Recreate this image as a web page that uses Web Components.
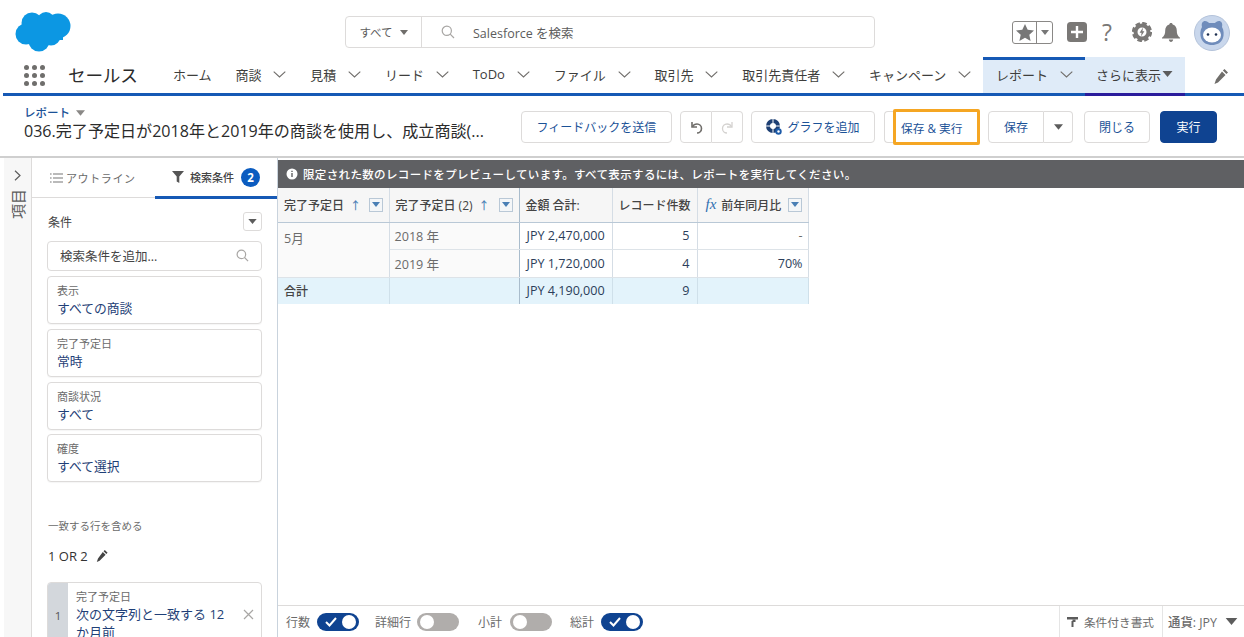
<!DOCTYPE html>
<html lang="ja">
<head>
<meta charset="utf-8">
<title>レポート</title>
<style>
html,body{margin:0;padding:0;height:100%;background:#fff;overflow:hidden}
body{font-family:"Open Sans","Noto Sans CJK JP",sans-serif;color:#3e3e3c}
</style>
</head>
<body>
<sf-app>
  <sf-global-header slot="top"></sf-global-header>
  <sf-nav slot="top">
    <sf-nav-item>ホーム</sf-nav-item>
    <sf-nav-item chevron>商談</sf-nav-item>
    <sf-nav-item chevron>見積</sf-nav-item>
    <sf-nav-item chevron>リード</sf-nav-item>
    <sf-nav-item chevron>ToDo</sf-nav-item>
    <sf-nav-item chevron>ファイル</sf-nav-item>
    <sf-nav-item chevron>取引先</sf-nav-item>
    <sf-nav-item chevron>取引先責任者</sf-nav-item>
    <sf-nav-item chevron>キャンペーン</sf-nav-item>
    <sf-nav-item chevron active>レポート</sf-nav-item>
    <sf-nav-item more>さらに表示</sf-nav-item>
  </sf-nav>
  <sf-page-header slot="top"></sf-page-header>
  <sf-rail slot="left"></sf-rail>
  <sf-filter-panel slot="left"></sf-filter-panel>
  <sf-report-view slot="main"></sf-report-view>
</sf-app>
<script>
function def(name, html, init){
  customElements.define(name, class extends HTMLElement{
    constructor(){super();this.attachShadow({mode:'open'}).innerHTML=html;}
    connectedCallback(){ if(init) init(this); }
  });
}
const TRI = (w,h,c)=>`<svg width="${w}" height="${h}" viewBox="0 0 10 6"><path d="M0 0h10L5 6z" fill="${c}"/></svg>`;

def('sf-app',`<style>
:host{display:flex;flex-direction:column;height:637px;overflow:hidden}
.body{flex:1;min-height:0;display:flex;overflow:hidden}
.left{display:flex;flex:none}
.main{flex:1;min-width:0;display:flex}
</style>
<slot name="top"></slot>
<div class="body"><div class="left"><slot name="left"></slot></div><div class="main"><slot name="main"></slot></div></div>`);

def('sf-global-header',`<style>
:host{display:grid;grid-template-columns:345px 530px 1fr;height:57px;box-sizing:border-box;padding-top:7px;align-items:center;flex:none}
.logo{padding-left:15px;display:flex}
.search{display:flex;height:32px;border:1px solid #dddbda;border-radius:4px;box-sizing:border-box;font-size:12.5px;color:#5c5c5c;align-items:center}
.all{width:76px;height:100%;box-sizing:border-box;border-right:1px solid #dddbda;display:flex;align-items:center;justify-content:center;gap:7px;font-size:11.5px}
.q{margin-left:19px;display:flex}
.ph{margin-left:18px}
.icons{display:flex;align-items:center;position:relative;height:100%;padding-left:137px}
.fav{display:flex;width:41px;height:23px;border:1px solid #8a8886;border-radius:3px;box-sizing:border-box}
.fav div{display:flex;align-items:center;justify-content:center}
.fav .a{width:23px;border-right:1px solid #8a8886}
.fav .b{flex:1}
.plus{margin-left:14px}
.help{margin-left:15px;font-size:23px;line-height:24px;color:#7a7876;width:12px;font-weight:400}
.gear{margin-left:18px}
.bell{margin-left:10px}
.av{margin-left:14px;margin-top:1px}
svg{display:block}
</style>
<div class="logo"><svg width="58" height="40" viewBox="0 0 58 40"><g fill="#0c97e3"><circle cx="17" cy="11" r="10.5"/><circle cx="31" cy="9" r="9"/><circle cx="43" cy="14" r="12.5"/><circle cx="11" cy="22" r="10.5"/><circle cx="24" cy="29" r="10.5"/><circle cx="36" cy="24" r="9.5"/><rect x="12" y="10" width="36" height="18"/></g></svg></div>
<div class="search">
  <div class="all"><span>すべて</span>${TRI(8,5,'#706e6b')}</div>
  <div class="q"><svg width="14" height="14" viewBox="0 0 14 14" fill="none" stroke="#a8a6a4" stroke-width="1.2"><circle cx="5.8" cy="5.8" r="4.6"/><path d="M9.2 9.2 13 13"/></svg></div>
  <span class="ph">Salesforce を検索</span>
</div>
<div class="icons">
  <div class="fav"><div class="a"><svg width="18" height="17" viewBox="0 0 18 17"><path d="M9 0l2.7 5.8 6.3.7-4.7 4.2 1.3 6.3L9 13.8 3.4 17l1.3-6.3L0 6.5l6.3-.7z" fill="#777"/></svg></div><div class="b">${TRI(8,5,'#777')}</div></div>
  <div class="plus"><svg width="20" height="20" viewBox="0 0 20 20"><rect width="20" height="20" rx="3.5" fill="#7a7876"/><path d="M10 4v12M4 10h12" stroke="#fff" stroke-width="2.4"/></svg></div>
  <div class="help">?</div>
  <div class="gear"><svg width="20" height="20" viewBox="0 0 20 20"><circle cx="10" cy="10" r="6.500" fill="none" stroke="#7a7876" stroke-width="4"/><circle cx="10" cy="10" r="8.800" fill="none" stroke="#7a7876" stroke-width="2.600" stroke-dasharray="4.6 2.300"/><path d="M11 5.500 7.600 10.800h2L9 14.500l3.400-5.300h-2z" fill="#7a7876"/></svg></div>
  <div class="bell"><svg width="18" height="19" viewBox="0 0 18 19"><path d="M9 0c1 0 1.700.7 1.700 1.600C13.400 2.400 14.800 4.700 14.800 7.500c0 3.500.6 5 3.200 7.200v.8H0v-.8C2.600 12.500 3.200 11 3.200 7.500c0-2.800 1.400-5.100 4.100-5.900C7.300.7 8 0 9 0zM6.800 16.500h4.400C11 18 10.100 19 9 19s-2-1-2.200-2.500z" fill="#7a7876"/></svg></div>
  <div class="av"><svg width="36" height="36" viewBox="0 0 36 36"><circle cx="18" cy="18" r="17.500" fill="#c9d7ec" stroke="#b4c3da"/><path d="M8 12c-1-4 1-6 3-6 2 0 3 1 4 2h6c1-1 2-2 4-2s4 2 3 6c2 3 2 8 1 11-2 5-6 7-11 7S9 28 7 23c-1-3-1-8 1-11z" fill="#6f8cbb"/><ellipse cx="18" cy="20" rx="9" ry="7.500" fill="#fff"/><circle cx="14" cy="19.500" r="1.300" fill="#1e2f50"/><circle cx="22" cy="19.500" r="1.300" fill="#1e2f50"/></svg></div>
</div>`);

def('sf-nav',`<style>
:host{display:flex;height:39px;margin-left:3px;box-sizing:border-box;border-bottom:3px solid #1659b5;flex:none;position:relative;align-items:stretch}
.launcher{width:21px;margin-left:21px;display:grid;grid-template-columns:repeat(3,5px);gap:3px;align-content:center}
.launcher i{width:5px;height:5px;border-radius:50%;background:#6f6e6c}
.name{font-size:17.6px;line-height:36px;margin-left:23px;width:93px;color:#2b2b2b;white-space:nowrap;letter-spacing:-.2px;flex:none}
.pen{position:absolute;right:16px;top:12px}
::slotted(sf-nav-item){flex:none}
</style>
<div class="launcher"><i></i><i></i><i></i><i></i><i></i><i></i><i></i><i></i><i></i></div>
<div class="name">セールス</div>
<slot></slot>
<svg class="pen" width="14" height="15" viewBox="0 0 14 15"><path d="M10.500 0l3.500 3.500-1.600 1.600-3.500-3.500zM8 2.500 11.500 6 4 13.500.5 15 2 10.500z" fill="#706e6b"/></svg>`);

def('sf-nav-item',`<style>
:host{display:flex;align-items:center;padding:0 11.750px 2px 12px;font-size:13px;color:#3e3e3c;gap:12px;height:36px;box-sizing:border-box;white-space:nowrap;position:relative}
:host([active]){background:#dfebf8;border-top:3px solid #1659b5;padding:0 12px 5px 13px;gap:12px}
:host([more]){background:#dfebf8;width:100px;padding:0 0 2px 11px;gap:1px;height:39px;margin-bottom:-3px;border-bottom:3px solid #2a1c9c}
:host(:not([chevron])) .c{display:none}
.m{display:none}
:host([more]) .m{display:block}
svg{display:block;flex:none}
</style>
<slot></slot>
<svg class="c" width="13" height="7" viewBox="0 0 13 7" fill="none" stroke="#706e6b" stroke-width="1.1"><path d="M.7.7 6.500 6l5.800-5.300"/></svg>
<span class="m">${TRI(11,6,'#5c5c5c')}</span>`);

def('sf-btn',`<style>
:host{display:inline-flex;align-items:center;justify-content:center;height:32px;box-sizing:border-box;border:1px solid #dddbda;border-radius:4px;background:#fff;color:#1b5297;font-size:12px;white-space:nowrap;flex:none;gap:5px}
:host([brand]){background:#0f4391;border-color:#0f4391;color:#fff}
</style><slot></slot>`);

def('sf-page-header',`<style>
:host{display:flex;height:62px;box-sizing:border-box;border-bottom:2px solid #cfcfcf;flex:none;position:relative}
.t{padding:10px 0 0 24px;width:521px;box-sizing:border-box;flex:none}
.crumb{font-size:11.500px;line-height:14px;color:#1b5297;display:flex;align-items:center;gap:6px;font-weight:500}
.title{font-size:16.070px;line-height:20px;color:#2b2b2b;white-space:nowrap;margin-top:1px}
.acts{display:flex;align-items:flex-start;padding-top:15px}
.group{display:flex;flex:none}
.orange{position:relative;margin-left:18px;width:87px;height:36px;box-sizing:border-box;border:3px solid #f5a623;margin-top:-2px;background:#fff;display:flex;align-items:center;padding-left:5px;color:#1b5297;font-size:11.700px;border-radius:2px;flex:none;white-space:nowrap}
.ghost{position:absolute;left:-12px;top:-1px;width:9px;height:32px;border:1px solid #dddbda;border-right:0;border-radius:4px 0 0 4px;box-sizing:border-box}
svg{display:block}
</style>
<div class="t">
  <div class="crumb"><span>レポート</span>${TRI(9,6,'#8a8886')}</div>
  <div class="title">036.完了予定日が2018年と2019年の商談を使用し、成立商談(...</div>
</div>
<div class="acts">
  <sf-btn style="width:151px">フィードバックを送信</sf-btn>
  <div class="group" style="margin-left:8px">
    <sf-btn style="width:32px;border-radius:4px 0 0 4px"><svg width="13" height="13" viewBox="0 0 13 13" fill="none" stroke="#706e6b" stroke-width="1.600"><path d="M2 1v5h5"/><path d="M2.400 5.800C3.500 3.800 5.200 3 7 3c2.500 0 4.500 2 4.500 4.500S9.500 12 7 12"/></svg></sf-btn>
    <sf-btn style="width:31px;border-left:0;border-radius:0 4px 4px 0"><svg width="13" height="13" viewBox="0 0 13 13" fill="none" stroke="#d4d2d0" stroke-width="1.300"><path d="M11 1v5H6"/><path d="M10.600 5.800C9.500 3.800 7.800 3 6 3 3.500 3 1.500 5 1.500 7.500S3.500 12 6 12"/></svg></sf-btn>
  </div>
  <sf-btn style="width:124px;margin-left:8px"><svg width="16" height="16" viewBox="0 0 16 16"><circle cx="7" cy="7" r="5" fill="none" stroke="#1d3f73" stroke-width="4"/><path d="M7 0v14M0 7h14" stroke="#fff" stroke-width="1"/><circle cx="12.500" cy="12.500" r="3.200" fill="#1d5ba8"/><circle cx="12.500" cy="12.500" r="1.200" fill="#fff"/></svg>グラフを追加</sf-btn>
  <div class="orange"><span class="ghost"></span>保存 &amp; 実行</div>
  <div class="group" style="margin-left:8px">
    <sf-btn style="width:56px;border-radius:4px 0 0 4px">保存</sf-btn>
    <sf-btn style="width:29px;border-left:0;border-radius:0 4px 4px 0">${TRI(9,6,'#5c5c5c')}</sf-btn>
  </div>
  <sf-btn style="width:66px;margin-left:11px">閉じる</sf-btn>
  <sf-btn brand style="width:57px;margin-left:10px">実行</sf-btn>
</div>`);

def('sf-rail',`<style>
:host{display:flex;flex-direction:column;align-items:center;width:28px;margin-left:4px;box-sizing:border-box;background:#f7f7f7;border-right:1px solid #dddbda;flex:none;padding-top:12px}
.v{writing-mode:vertical-rl;text-orientation:sideways;transform:rotate(180deg);font-size:15px;line-height:16px;color:#5c5c5c;letter-spacing:0;margin-top:8px}
svg{display:block}
</style>
<svg width="7" height="11" viewBox="0 0 7 11" fill="none" stroke="#5c5c5c" stroke-width="1.200"><path d="M1 .8 6 5.500 1 10.200"/></svg>
<div class="v">項目</div>`);

def('sf-filter-card',`<style>
:host{display:block;border:1px solid #dddbda;border-radius:4px;box-sizing:border-box;padding:6px 9px 6px;background:#fff;height:48px;box-shadow:0 1px 1px rgba(0,0,0,.04)}
.l{font-size:11px;line-height:15px;color:#6b6b6b}
.v{font-size:12.800px;line-height:18px;color:#1f3f77;margin-top:1px}
</style><div class="l"><slot name="label"></slot></div><div class="v"><slot></slot></div>`);

def('sf-filter-panel',`<style>
:host{display:flex;flex-direction:column;width:246px;box-sizing:border-box;border-right:1px solid #c9d3dd;overflow:hidden;flex:none}
.tabs{display:flex;height:40px;border-bottom:1px solid #dddbda;box-sizing:border-box;flex:none;font-size:11px;color:#6b6b6b}
.tab{display:flex;align-items:center;height:100%;box-sizing:border-box}
.t1{width:123px;padding-left:18px;gap:3px;letter-spacing:.6px}
.t2{flex:1;border-bottom:3px solid #1659b5;height:41px;padding-left:17px;gap:6px;font-weight:500;color:#444;font-size:11px}
.badge{width:19px;height:19px;border-radius:50%;background:#0b5cc0;color:#fff;font-size:11.500px;font-weight:700;display:flex;align-items:center;justify-content:center;margin-left:1px}
.c{padding:0 15px 0 15px;flex:1;min-height:0}
.h{display:flex;justify-content:space-between;align-items:center;height:43px;box-sizing:border-box;padding:4px 0 0 1px;font-size:12px;color:#444}
.dd{width:19px;height:19px;border:1px solid #dddbda;border-radius:3px;display:flex;align-items:center;justify-content:center;box-sizing:border-box}
.in{height:30px;border:1px solid #dddbda;border-radius:4px;box-sizing:border-box;display:flex;align-items:center;justify-content:space-between;padding:0 12px 2px;font-size:12.500px;color:#444}
sf-filter-card{margin-top:5px}
.match{font-size:10.500px;color:#6b6b6b;margin-top:37px;line-height:14px;padding-left:1px}
.logic{display:flex;align-items:center;gap:8px;font-size:13px;color:#333;margin-top:14px;line-height:18px;padding-left:1px}
.rule{display:flex;margin-top:17px;border:1px solid #dddbda;border-radius:4px;height:72px;box-sizing:border-box;overflow:hidden}
.idx{width:20px;background:#d3d7dc;font-size:11.500px;color:#555;display:flex;align-items:center;justify-content:center;flex:none;padding-bottom:6px;box-sizing:border-box}
.rb{flex:1;padding:6px 0 0 8px;font-size:11px;line-height:15px;color:#6b6b6b;min-width:0}
.rv{font-size:13px;line-height:18px;color:#1f3f77;margin-top:1px;width:152px}
.x{padding:26px 7px 0 0;flex:none}
svg{display:block}
</style>
<div class="tabs">
  <div class="tab t1"><svg width="13" height="10" viewBox="0 0 13 10" stroke="#777" stroke-width="1.100"><path d="M0 1h1.600M3 1h10M0 5h1.600M3 5h10M0 9h1.600M3 9h10"/></svg><span>アウトライン</span></div>
  <div class="tab t2"><svg width="12" height="12" viewBox="0 0 12 12"><path d="M0 0h12L7.300 5.500V12L4.700 10.400V5.500z" fill="#555"/></svg><span>検索条件</span><span class="badge">2</span></div>
</div>
<div class="c">
  <div class="h"><span>条件</span><span class="dd">${TRI(9,5,'#5c5c5c')}</span></div>
  <div class="in"><span>検索条件を追加...</span><svg width="13" height="13" viewBox="0 0 14 14" fill="none" stroke="#a8a6a4" stroke-width="1.300"><circle cx="5.800" cy="5.800" r="4.600"/><path d="M9.200 9.200 13 13"/></svg></div>
  <sf-filter-card><span slot="label">表示</span>すべての商談</sf-filter-card>
  <sf-filter-card><span slot="label">完了予定日</span>常時</sf-filter-card>
  <sf-filter-card><span slot="label">商談状況</span>すべて</sf-filter-card>
  <sf-filter-card style="margin-top:4px"><span slot="label">確度</span>すべて選択</sf-filter-card>
  <div class="match">一致する行を含める</div>
  <div class="logic"><span>1 OR 2</span><svg width="12" height="12" viewBox="0 0 14 15"><path d="M10.500 0l3.500 3.500-1.600 1.600-3.500-3.500zM8 2.500 11.500 6 4 13.500.5 15 2 10.500z" fill="#444"/></svg></div>
  <div class="rule"><div class="idx">1</div><div class="rb">完了予定日<div class="rv">次の文字列と一致する 12 か月前</div></div><div class="x"><svg width="11" height="11" viewBox="0 0 11 11" stroke="#a8a6a4" stroke-width="1.200"><path d="M1 1l9 9M10 1l-9 9"/></svg></div></div>
</div>`);

def('sf-toggle',`<style>
:host{display:block;width:42px;height:18px;border-radius:9px;background:#b0adab;position:relative;flex:none}
:host([on]){background:#0f4391}
.k{position:absolute;top:2px;left:3px;width:14px;height:14px;border-radius:50%;background:#fff}
:host([on]) .k{left:25px}
svg{position:absolute;left:8px;top:4px;display:none}
:host([on]) svg{display:block}
</style><svg width="12" height="10" viewBox="0 0 12 10" fill="none" stroke="#fff" stroke-width="2"><path d="M1 5l3.500 3.500L11 1"/></svg><div class="k"></div>`);

def('sf-report-view',`<style>
:host{display:flex;flex-direction:column;flex:1;min-width:0;height:100%}
.info{height:28px;background:#5f6063;margin-top:2px;color:#fff;font-size:11.500px;font-weight:500;display:flex;align-items:center;gap:5px;padding-left:8px;flex:none;letter-spacing:.35px;white-space:nowrap}
.wrap{flex:1;min-height:0;overflow:hidden}
table{border-collapse:collapse;table-layout:fixed;width:530px;font-size:12.600px;color:#5c5c5c}
th,td{box-sizing:border-box;padding:0 6px;white-space:nowrap;border-right:1px solid #d5dde5;overflow:hidden}
th{height:34px;background:#f6f6f6;border-bottom:1px solid #b9c8d6;font-weight:500;text-align:left;color:#444;font-size:12px}
td{height:27.500px;border-bottom:1px solid #dde3e8;background:#fff;color:#2c3e5a}
td.g{background:#fafafa;color:#6b6b6b;padding-left:5px}
td.top{vertical-align:top;padding-top:5px;padding-left:6px}
td.r,th.r{text-align:right;padding-right:7px}
td.n{padding-left:7px}
.strong{border-right:1px solid #a9bccc}
tr.total td{background:#e3f3fb;border-top:1px solid #b9c8d6;border-bottom:0;height:27px;border-right-color:#cfe0ea;font-size:12.600px}
tr.total td.strong{border-right-color:#a9bccc}
.hc{display:flex;align-items:center}
.arrow{color:#4a7fb5;margin-left:6px;font-size:11px}
.mn{width:14px;height:14px;border:1px solid #b9c8d6;margin-left:auto;display:flex;align-items:center;justify-content:center;box-sizing:border-box;background:#f4f6f8;flex:none}
.fx{font-family:"Liberation Serif",serif;font-style:italic;font-size:15px;color:#2f6fb0;margin:0 5px 0 2px;font-weight:400}
.bar{height:32px;border-top:1px solid #dddbda;box-sizing:border-box;display:flex;align-items:center;flex:none;padding-left:8px;font-size:12px;color:#6b6b6b;background:#fff}
.bar span.l{margin-right:7px}
.bar sf-toggle{margin-right:16px}
.sp{flex:1}
.cf{height:100%;border-left:1px solid #e5e5e5;display:flex;align-items:center;gap:6px;padding:0 8px 0 7px;font-size:11.700px}
.cur{height:100%;border-left:1px solid #e5e5e5;display:flex;align-items:center;padding:0 6px 0 5px;gap:8px;font-weight:500;font-size:12.400px}
svg{display:block}
</style>
<div class="info"><svg width="12" height="12" viewBox="0 0 12 12"><circle cx="6" cy="6" r="5.500" fill="#fff"/><path d="M6 5v4M6 2.800v1.200" stroke="#5f6063" stroke-width="1.400"/></svg><span>限定された数のレコードをプレビューしています。すべて表示するには、レポートを実行してください。</span></div>
<div class="wrap"><table>
<colgroup><col style="width:111px"><col style="width:130px"><col style="width:93px"><col style="width:85px"><col style="width:111px"></colgroup>
<tr><th><div class="hc">完了予定日<span class="arrow">↑</span><span class="mn">${TRI(8,5,'#4a7fb5')}</span></div></th><th class="strong"><div class="hc">完了予定日 (2)<span class="arrow">↑</span><span class="mn">${TRI(8,5,'#4a7fb5')}</span></div></th><th>金額 合計:</th><th class="r">レコード件数</th><th><div class="hc"><span class="fx">fx</span>前年同月比<span class="mn">${TRI(8,5,'#4a7fb5')}</span></div></th></tr>
<tr><td class="g top" rowspan="2">5月</td><td class="g strong">2018 年</td><td class="n">JPY 2,470,000</td><td class="r">5</td><td class="r" style="padding-right:5px;color:#6b6b6b">-</td></tr>
<tr><td class="g strong">2019 年</td><td class="n">JPY 1,720,000</td><td class="r">4</td><td class="r" style="padding-right:5px">70%</td></tr>
<tr class="total"><td style="font-weight:500;color:#444;font-size:12px">合計</td><td class="strong"></td><td class="n">JPY 4,190,000</td><td class="r">9</td><td></td></tr>
</table></div>
<div class="bar">
  <span class="l">行数</span><sf-toggle on></sf-toggle>
  <span class="l" style="margin-right:6px">詳細行</span><sf-toggle></sf-toggle>
  <span class="l" style="margin-left:3px;margin-right:8px">小計</span><sf-toggle></sf-toggle>
  <span class="l" style="margin-left:2px">総計</span><sf-toggle on></sf-toggle>
  <span class="sp"></span>
  <div class="cf"><svg width="11" height="10" viewBox="0 0 11 10"><path d="M0 0h11v2.500H0z" fill="#5c5c5c"/><path d="M5.500 2.500h3V5h-2v5H4.500V4h1z" fill="#5c5c5c"/></svg><span>条件付き書式</span></div>
  <div class="cur"><span>通貨: JPY</span>${TRI(13,7,'#5c5c5c')}</div>
</div>`);
</script>
</body>
</html>
